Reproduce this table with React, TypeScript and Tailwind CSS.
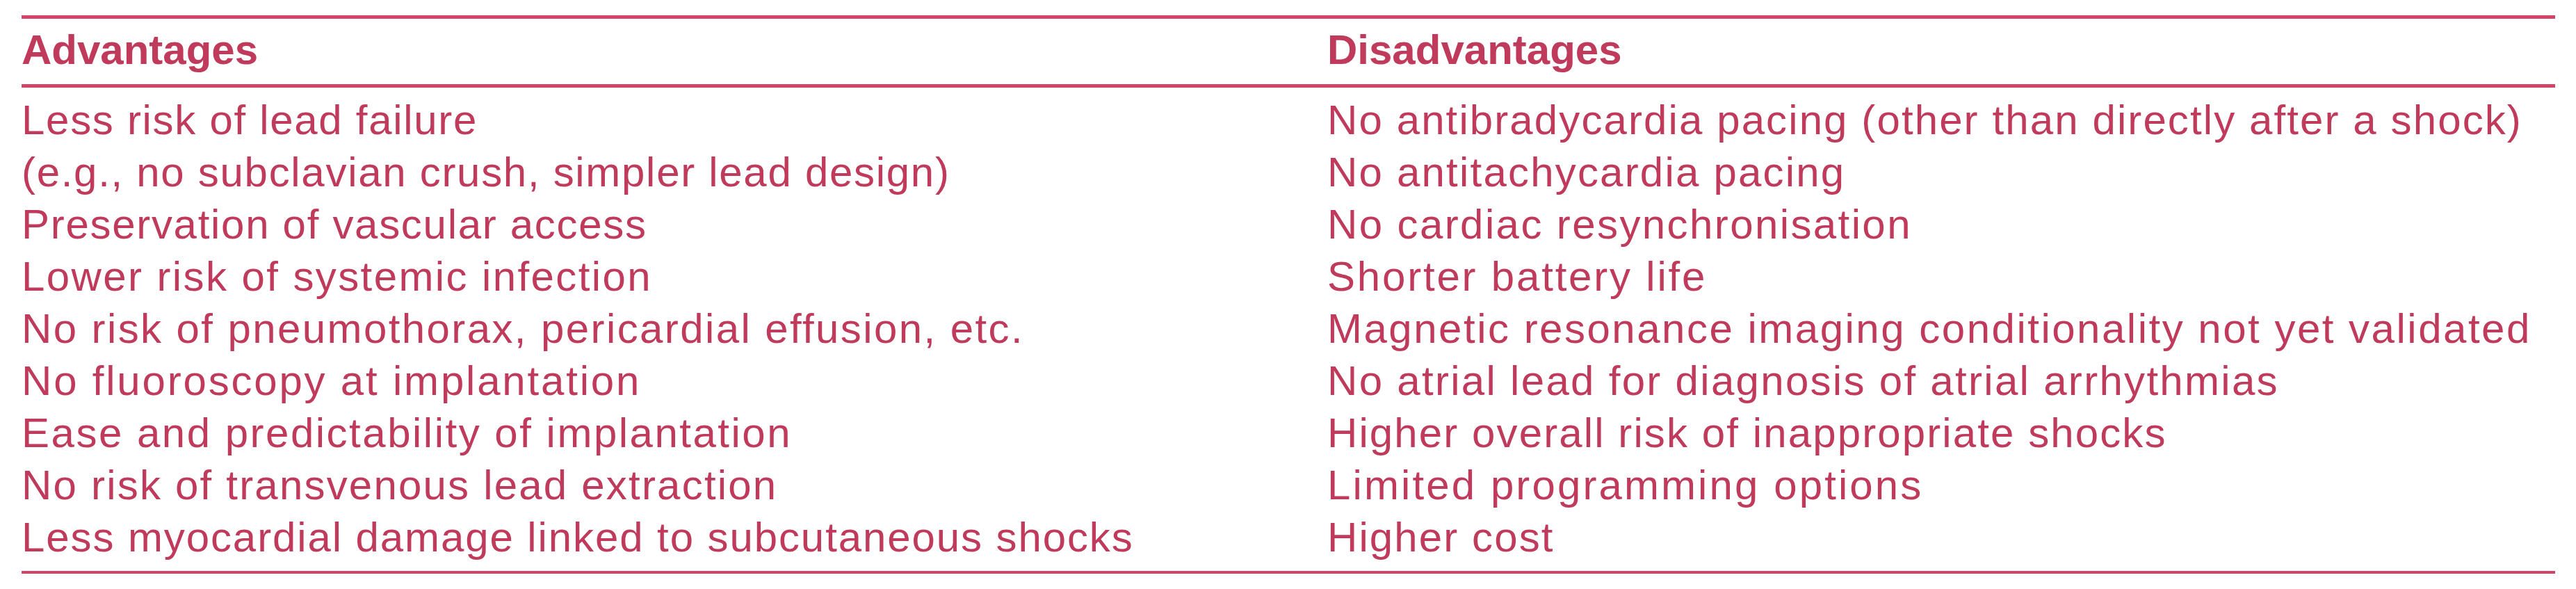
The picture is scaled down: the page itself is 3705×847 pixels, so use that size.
import React from "react";

type Item = { text: React.ReactNode; cls: string };

const advantages: Item[] = [
  {
    text: (
      <>
        Less risk of lead failure
        <br />
        (e.g., no subclavian crush, simpler lead design)
      </>
    ),
    cls: "tracking-[1.7px]",
  },
  { text: "Preservation of vascular access", cls: "tracking-[1.7px]" },
  { text: "Lower risk of systemic infection", cls: "tracking-[2.4px]" },
  { text: "No risk of pneumothorax, pericardial effusion, etc.", cls: "tracking-[2.4px]" },
  { text: "No fluoroscopy at implantation", cls: "tracking-[2.8px]" },
  { text: "Ease and predictability of implantation", cls: "tracking-[2.5px]" },
  { text: "No risk of transvenous lead extraction", cls: "tracking-[2.2px]" },
  { text: "Less myocardial damage linked to subcutaneous shocks", cls: "tracking-[1.9px]" },
];

const disadvantages: Item[] = [
  { text: "No antibradycardia pacing (other than directly after a shock)", cls: "tracking-[2.1px]" },
  { text: "No antitachycardia pacing", cls: "tracking-[2.2px]" },
  { text: "No cardiac resynchronisation", cls: "tracking-[2.4px]" },
  { text: "Shorter battery life", cls: "tracking-[2.8px]" },
  { text: "Magnetic resonance imaging conditionality not yet validated", cls: "tracking-[2.5px]" },
  { text: "No atrial lead for diagnosis of atrial arrhythmias", cls: "tracking-[2.3px]" },
  { text: "Higher overall risk of inappropriate shocks", cls: "tracking-[2.1px]" },
  { text: "Limited programming options", cls: "tracking-[3.1px]" },
  { text: "Higher cost", cls: "tracking-[2.1px]" },
];

export default function App() {
  return (
    <div className="w-[3705px] h-[847px] bg-white pt-[22px] font-['Liberation_Sans',Arial,sans-serif] text-[#bf3a5b]">
      <div className="ml-[31px] w-[3644px]">
        <div className="h-[5px] bg-[#d24366]" />
        <div className="grid grid-cols-[1878px_1fr] pt-[15px] pb-[19px] text-[60px] leading-[60px] font-bold">
          <div>Advantages</div>
          <div>Disadvantages</div>
        </div>
        <div className="h-[5px] bg-[#d24366]" />
        <div className="grid grid-cols-[1878px_1fr] pt-[9px] pb-[11px] text-[60px] leading-[75px]">
          <div className="flex flex-col">
            {advantages.map((a, i) => (
              <div key={i} className={a.cls}>
                {a.text}
              </div>
            ))}
          </div>
          <div className="flex flex-col">
            {disadvantages.map((d, i) => (
              <div key={i} className={d.cls}>
                {d.text}
              </div>
            ))}
          </div>
        </div>
        <div className="h-[4px] bg-[#d24366]" />
      </div>
    </div>
  );
}
